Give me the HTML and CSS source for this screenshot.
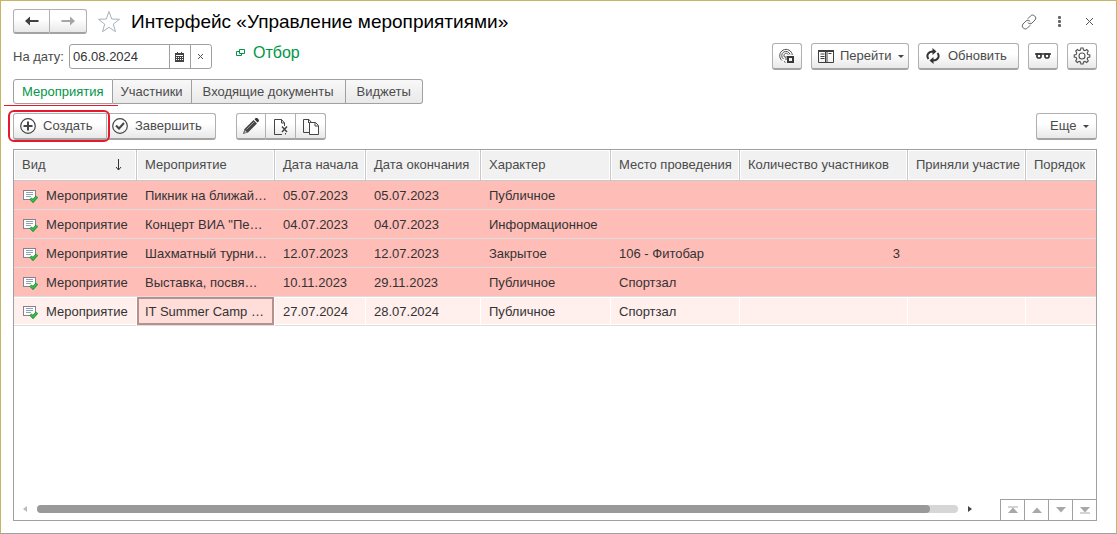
FILE: index.html
```html
<!DOCTYPE html>
<html lang="ru">
<head>
<meta charset="utf-8">
<title>Интерфейс «Управление мероприятиями»</title>
<link rel="stylesheet" href="styles.css">
</head>
<body>
<svg class="sprite" aria-hidden="true">
  <symbol id="event" viewBox="0 0 16 14">
    <rect x="1.500" y="1.500" width="12" height="9" fill="#fff" stroke="#85818f"/>
    <path d="M4 3.500h7M4 5.500h7M4 7.500h5" stroke="#8fa3b0"/>
    <path d="M8.500 9.500l2.500 2.500 4-4.500" fill="none" stroke="#238a35" stroke-width="3"/>
    <path d="M8.500 9.500l2.500 2.500 4-4.500" fill="none" stroke="#3bc24e" stroke-width="1.500"/>
  </symbol>
</svg>
<main class="window">
  <header class="titlebar">
    <div class="group nav">
      <button class="btn" aria-label="Назад"><svg width="16" height="12" viewBox="0 0 16 12"><path d="M2 6h12.500" stroke="#404040" stroke-width="2"/><path d="M1 6l5-4.500v9z" fill="#404040"/></svg></button>
      <button class="btn" aria-label="Вперед"><svg width="16" height="12" viewBox="0 0 16 12"><path d="M1.500 6H14" stroke="#a5a5a5" stroke-width="2"/><path d="M15 6l-5-4.500v9z" fill="#a5a5a5"/></svg></button>
    </div>
    <button class="plain star" aria-label="В избранное"><svg width="24" height="24" viewBox="0 0 24 24"><path d="M12 1.500l2.700 7.500 7.800.3-6.200 4.800 2.200 7.600L12 17.300l-6.500 4.400 2.200-7.600L1.500 9.300 9.300 9z" fill="#fff" stroke="#a9b0b8"/></svg></button>
    <h1>Интерфейс «Управление мероприятиями»</h1>
    <div class="window-tools">
      <button class="plain" aria-label="Ссылка"><svg width="16" height="16" viewBox="0 0 16 16" fill="none" stroke="#666" stroke-linecap="round"><path d="M7 4.500l2.700-2.700c2.500-2.400 6.800 1.500 4.300 4.200l-3 3c-1.200 1.200-3 1-4-.3M9 11.500l-2.700 2.700c-2.500 2.400-6.800-1.500-4.300-4.200l3-3c1.200-1.200 3-1 4 .3"/></svg></button>
      <button class="plain" aria-label="Меню"><svg width="16" height="16" viewBox="0 0 16 16" fill="#666"><rect x="7" y="2" width="3" height="3" rx="1"/><rect x="7" y="6" width="3" height="3" rx="1"/><rect x="7" y="10" width="3" height="3" rx="1"/></svg></button>
      <button class="plain" aria-label="Закрыть"><svg width="16" height="16" viewBox="0 0 16 16"><path d="M5 4l7 7M12 4l-7 7" stroke="#555"/></svg></button>
    </div>
  </header>

  <section class="filters">
    <label for="date">На дату:</label>
    <div class="date-field">
      <input id="date" type="text" value="06.08.2024">
      <button aria-label="Календарь"><svg width="9" height="10" viewBox="0 0 9 10"><path d="M0 1h9v9H0z" fill="#444"/><path d="M2.500 0v2M6.500 0v2" stroke="#444"/><path d="M1 5.500h7M1 7.500h7" stroke="#fff" stroke-dasharray="1 1"/><path d="M1 3.500h7" stroke="#fff"/></svg></button>
      <button aria-label="Очистить"><svg width="7" height="7" viewBox="0 0 7 7"><path d="M1 1l5 5M6 1L1 6" stroke="#555"/></svg></button>
    </div>
    <a class="filter-link" href="#"><svg width="10" height="8" viewBox="0 0 10 8" fill="#fff" stroke="#009646"><path d="M.5 2.500h5v4h-5z"/><path d="M3.500.5h5v4h-5z"/></svg>Отбор</a>
    <div class="actions">
      <button class="btn icon" aria-label="Доступ"><svg width="16" height="16" viewBox="0 0 16 16" fill="none" stroke="#505050"><path d="M3 12.500A6.300 6.300 0 1 1 13.300 7M4.500 11A4.200 4.200 0 1 1 11 6.500M6.300 9.500a2.200 2.200 0 1 1 2.900-2.800M5 13.500l1.500.8M7 12V8"/><path d="M9 9h5v5H9z" stroke="#383838" stroke-width="2"/></svg></button>
      <button class="btn go"><svg width="16" height="13" viewBox="0 0 16 13" fill="none" stroke="#3f3f3f"><path d="M.5 1h15v11.500H.5zM7.500 1v11.500M9 1v11.500M2.500 4h4M2.500 6.500h4M2.500 8.500h4M10.500 3.500h3"/><path d="M0 1h16" stroke-width="2"/></svg>Перейти<i class="caret"></i></button>
      <button class="btn refresh"><svg width="14" height="16" viewBox="0 0 14 16" fill="none" stroke="#333" stroke-width="2"><path d="M2.500 11C0 7.500 2 3.500 7 3.500M11.500 5C14 8.500 12 12.500 7 12.500"/><path d="M6.500 0l4 3.500-4 3.500zM7.500 9l-4 3.500 4 3.500z" fill="#333" stroke="none"/></svg>Обновить</button>
      <button class="btn icon" aria-label="Просмотр"><svg width="16" height="8" viewBox="0 0 16 8" fill="none" stroke="#333"><path d="M0 2h16" stroke-width="1.500"/><path d="M2 2v3l1 1h2l1-1V2zM10 2v3l1 1h2l1-1V2z" stroke-width="1.700"/></svg></button>
      <button class="btn icon" aria-label="Настройки"><svg width="18" height="18" viewBox="0 0 18 18" fill="none" stroke="#505050" stroke-width="1.100"><path d="M7.500 3l.4-2h2.200l.4 2 1.500.6 1.700-1.100 1.600 1.600L14.200 6l.6 1.500 2 .4v2.200l-2 .4-.6 1.500 1.100 1.900-1.600 1.600-1.700-1.100-1.500.6-.4 2H7.900l-.4-2L6 14.400l-1.700 1.100-1.600-1.600L3.800 12l-.6-1.500-2-.4V7.900l2-.4L3.800 6 2.700 4.100l1.600-1.600L6 3.600z"/><circle cx="9" cy="9" r="3"/></svg></button>
    </div>
  </section>

  <nav class="tabs">
    <button class="tab active">Мероприятия</button><button class="tab">Участники</button><button class="tab wide">Входящие документы</button><button class="tab wide">Виджеты</button>
  </nav>

  <section class="commands">
    <div class="group">
      <button class="btn create"><svg width="16" height="16" viewBox="0 0 16 16" fill="none" stroke="#454545"><circle cx="8" cy="8" r="7.300" stroke-width="1.200"/><path d="M8 3.500v9M3.500 8h9" stroke-width="2"/></svg>Создать</button>
      <button class="btn finish"><svg width="16" height="16" viewBox="0 0 16 16" fill="none" stroke="#454545"><circle cx="8" cy="8" r="7.300" stroke-width="1.200"/><path d="M4 7.500l3 3L12 5" stroke-width="2"/></svg>Завершить</button>
    </div>
    <div class="group edit">
      <button class="btn" aria-label="Изменить"><svg width="18" height="18" viewBox="0 0 18 18"><path d="M1 17l1.500-5L11.500 3l3.500 3.500L6 15.500z" fill="#454545"/><path d="M12.500 2.200l1-1c1.500-1.200 4.300 1.500 3.200 3l-1.200 1.200z" fill="#333"/><path d="M4.500 12.500l7.500-7.500" stroke="#999"/><path d="M2.800 13l2.200 2.200-2.500.8z" fill="#ccc"/></svg></button>
      <button class="btn" aria-label="Пометить на удаление"><svg width="16" height="17" viewBox="0 0 16 17" fill="none" stroke="#454545"><path d="M9 16.500H1.500v-15h7l3 3.500v3M8.500 1.500V5h3M12.500 15v1.500"/><path d="M9 8.500l5 5.500M14 8.500L9 14" stroke-width="1.500"/></svg></button>
      <button class="btn" aria-label="Скопировать"><svg width="18" height="17" viewBox="0 0 18 17" fill="none" stroke="#454545"><path d="M7.500 14.500h-6v-13h5.500l2.500 3M6.500 1.500V5"/><path d="M7.500 4.500h6l3 3v9h-9zM13 4.500V8h3.500" fill="#fff"/></svg></button>
    </div>
    <button class="btn more">Еще<i class="caret"></i></button>
    <span class="mark-line"></span>
    <span class="mark-box"></span>
  </section>

  <section class="list">
    <table>
      <colgroup><col class="c-kind"><col class="c-name"><col class="c-start"><col class="c-end"><col class="c-type"><col class="c-place"><col class="c-count"><col class="c-came"><col></colgroup>
      <thead>
        <tr><th><span class="sorted">Вид<svg width="7" height="12" viewBox="0 0 7 12"><path d="M3.500 0v11M1 8l2.500 3L6 8" fill="none" stroke="#333"/></svg></span></th><th>Мероприятие</th><th>Дата начала</th><th>Дата окончания</th><th>Характер</th><th>Место проведения</th><th>Количество участников</th><th>Приняли участие</th><th>Порядок</th></tr>
      </thead>
      <tbody>
        <tr><td><span class="kind"><svg width="16" height="14"><use href="#event"/></svg>Мероприятие</span></td><td>Пикник на ближай…</td><td>05.07.2023</td><td>05.07.2023</td><td>Публичное</td><td></td><td></td><td></td><td></td></tr>
        <tr><td><span class="kind"><svg width="16" height="14"><use href="#event"/></svg>Мероприятие</span></td><td>Концерт ВИА "Пе…</td><td>04.07.2023</td><td>04.07.2023</td><td>Информационное</td><td></td><td></td><td></td><td></td></tr>
        <tr><td><span class="kind"><svg width="16" height="14"><use href="#event"/></svg>Мероприятие</span></td><td>Шахматный турни…</td><td>12.07.2023</td><td>12.07.2023</td><td>Закрытое</td><td>106 - Фитобар</td><td class="num">3</td><td></td><td></td></tr>
        <tr><td><span class="kind"><svg width="16" height="14"><use href="#event"/></svg>Мероприятие</span></td><td>Выставка, посвя…</td><td>10.11.2023</td><td>29.11.2023</td><td>Публичное</td><td>Спортзал</td><td></td><td></td><td></td></tr>
        <tr class="current"><td><span class="kind"><svg width="16" height="14"><use href="#event"/></svg>Мероприятие</span></td><td class="focus">IT Summer Camp …</td><td>27.07.2024</td><td>28.07.2024</td><td>Публичное</td><td>Спортзал</td><td></td><td></td><td></td></tr>
      </tbody>
    </table>
    <footer class="list-footer">
      <div class="scroll">
        <svg width="4" height="6" viewBox="0 0 4 6"><path d="M4 0v6L0 3z" fill="#bbb"/></svg>
        <div class="track"><div class="thumb"></div></div>
        <svg width="4" height="6" viewBox="0 0 4 6"><path d="M0 0v6l4-3z" fill="#444"/></svg>
      </div>
      <div class="pager">
        <button aria-label="В начало"><svg width="10" height="8" viewBox="0 0 10 8"><path d="M0 1h10" stroke="#a8a8a8"/><path d="M5 1.500L10 7H0z" fill="#a8a8a8"/></svg></button>
        <button aria-label="Вверх"><svg width="10" height="8" viewBox="0 0 10 8"><path d="M5 1.500L10 7H0z" fill="#a8a8a8"/></svg></button>
        <button aria-label="Вниз"><svg width="10" height="8" viewBox="0 0 10 8"><path d="M5 6.500L10 1H0z" fill="#a8a8a8"/></svg></button>
        <button aria-label="В конец"><svg width="10" height="8" viewBox="0 0 10 8"><path d="M0 7h10" stroke="#a8a8a8"/><path d="M5 6.500L10 1H0z" fill="#a8a8a8"/></svg></button>
      </div>
    </footer>
  </section>
</main>
</body>
</html>
```
FILE: styles.css
```css
* { box-sizing: border-box; }
body {
  margin: 0;
  font: 13px/16px "Liberation Sans", Arial, sans-serif;
  color: #4b4b4b;
  background: #fff;
}
button, input { font: inherit; color: inherit; margin: 0; }
svg { display: block; flex: none; }
.sprite { position: absolute; width: 0; height: 0; }

.window {
  min-height: 100vh;
  display: flex;
  flex-direction: column;
  padding: 8px 19px 12px 12px;
  border: 1px solid #c4b567;
  border-bottom-color: #a0a0a0;
}

.btn {
  display: flex;
  align-items: center;
  height: 27px;
  padding: 0 6px;
  border: 1px solid #b0b0b0;
  border-bottom: 2px solid #a3a3a3;
  border-radius: 3px;
  background: linear-gradient(#fff 40%, #e8e8e8);
  font-size: 13px;
  white-space: nowrap;
}
.group { display: flex; }
.group .btn:not(:first-child) { border-left: 0; border-top-left-radius: 0; border-bottom-left-radius: 0; }
.group .btn:not(:last-child) { border-top-right-radius: 0; border-bottom-right-radius: 0; }
.plain { border: 0; padding: 0; background: none; }
.caret { border: 3px solid transparent; border-top-color: #444; border-bottom: 0; }

.titlebar { display: flex; align-items: center; height: 25px; }
.nav .btn { width: 37px; height: 25px; justify-content: center; }
.star { margin-left: 10px; }
h1 { margin: 0 0 0 10px; font-size: 19px; line-height: 24px; font-weight: 400; color: #000; }
.window-tools { display: flex; gap: 14px; margin-left: auto; }

.filters { display: flex; align-items: center; height: 27px; margin-top: 9px; }
.date-field {
  display: flex;
  width: 143px;
  height: 25px;
  margin-left: 5px;
  border: 1px solid #a0a0a0;
  border-radius: 3px;
}
.date-field input { flex: 1; min-width: 0; padding: 0 3px; border: 0; background: none; color: #333; outline: 0; }
.date-field button {
  display: flex;
  align-items: center;
  justify-content: center;
  width: 21px;
  padding: 0;
  border: 0;
  border-left: 1px solid #a0a0a0;
  background: none;
}
.filter-link { display: flex; align-items: center; gap: 7px; margin: 0 0 8px 24px; color: #009646; font-size: 16px; line-height: 18px; text-decoration: none; }
.actions { display: flex; gap: 9px; margin-left: auto; }
.icon { width: 30px; justify-content: center; padding: 0; }
.go { width: 98px; gap: 6px; }
.refresh { width: 101px; gap: 8px; padding-left: 7px; }

.tabs { display: flex; margin-top: 9px; }
.tab {
  height: 25px;
  padding: 0 8px;
  border: 1px solid #a0a0a0;
  border-left-width: 0;
  background: linear-gradient(#f8f8f8, #e9e9e9);
  white-space: nowrap;
}
.tab:first-child { border-left-width: 1px; border-radius: 3px 0 0 3px; }
.tab.wide { padding: 0 11px; }
.tab:last-child { border-radius: 0 3px 3px 0; }
.tab.active { background: #fff; color: #009646; }

.commands { position: relative; display: flex; margin-top: 9px; }
.create { width: 94px; gap: 7px; }
.finish { width: 109px; gap: 7px; padding-left: 5px; }
.edit { margin-left: 20px; }
.edit .btn { width: 30px; padding: 0; justify-content: center; }
.more { width: 61px; margin-left: auto; padding-left: 13px; gap: 7px; }
.mark-line { position: absolute; left: -9px; top: -8px; width: 114px; height: 1px; background: #e8192c; }
.mark-box { position: absolute; left: -5px; top: -3px; width: 102px; height: 32px; border: 2px solid #e8192c; border-radius: 6px; pointer-events: none; }

.list { flex: 1; display: flex; flex-direction: column; margin-top: 9px; border: 1px solid #a0a0a0; }
table { width: 100%; table-layout: fixed; border-collapse: separate; border-spacing: 0; }
.c-kind { width: 123px; }
.c-name { width: 138px; }
.c-start { width: 91px; }
.c-end { width: 115px; }
.c-type { width: 130px; }
.c-place { width: 129px; }
.c-count { width: 168px; }
.c-came { width: 118px; }
th, td { padding: 0 8px; text-align: left; font-weight: 400; white-space: nowrap; overflow: hidden; }
th {
  height: 31px;
  background: #f1f1f1;
  border: solid #c8c8c8;
  border-width: 0 1px 1px 0;
  box-shadow: inset 0 0 0 1px #fff;
}
th:last-child, td:last-child { border-right: 0; }
td { height: 29px; padding-top: 1px; color: #333; background: #ffbdb8; border-bottom: 1px solid #dedede; }
.num { text-align: right; }
.current td { background: #ffefed; border-right: 1px solid #fff; box-shadow: inset 0 1px #fff, inset 0 -1px #fff; }
.current td:last-child { border-right: 0; }
.current .focus { background: #ffddd9; box-shadow: inset 0 0 0 2px #b88f8b; }
.sorted { display: flex; justify-content: space-between; align-items: center; padding-right: 6px; }
.kind { display: flex; align-items: center; gap: 8px; }

.list-footer { display: flex; align-items: flex-end; margin-top: auto; }
.scroll { flex: 1; display: flex; align-items: center; gap: 10px; height: 22px; padding: 0 28px 0 9px; }
.track { flex: 1; height: 8px; border-radius: 4px; background: #d6d6d6; }
.thumb { width: 97%; height: 8px; border-radius: 4px; background: #999; }
.pager { display: flex; border-top: 1px solid #a0a0a0; }
.pager button { display: flex; align-items: center; justify-content: center; width: 24px; height: 20px; padding: 0; border: 0; border-left: 1px solid #a0a0a0; background: #fff; }
```
